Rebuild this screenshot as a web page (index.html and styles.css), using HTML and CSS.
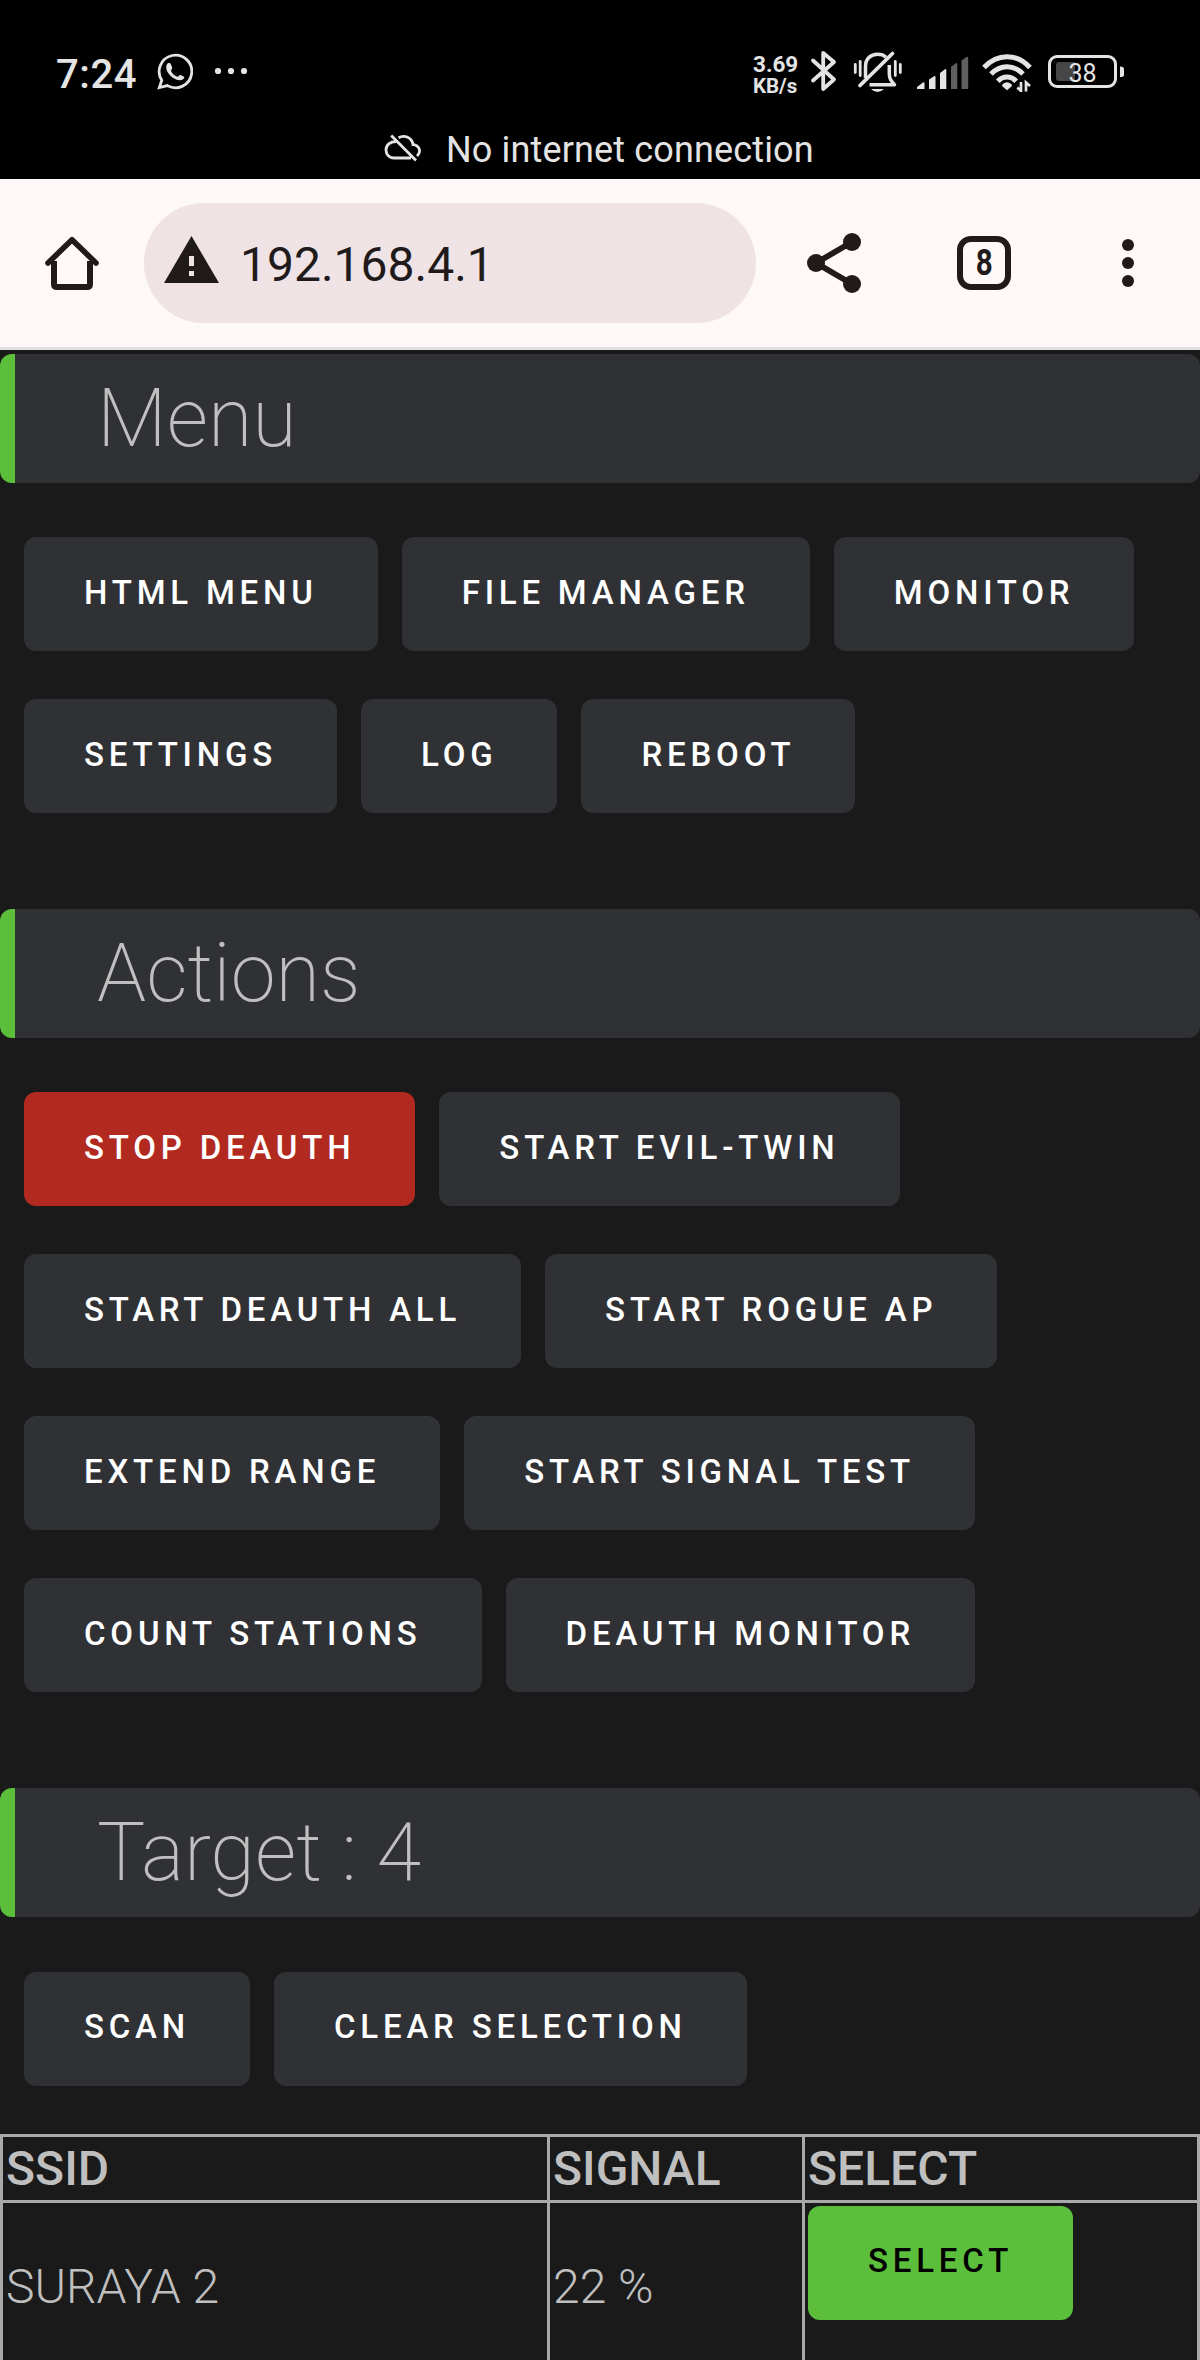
FILE: index.html
```html
<!DOCTYPE html>
<html lang="en">
<head>
<meta charset="utf-8">
<title>192.168.4.1</title>
<link rel="stylesheet" href="styles.css">
</head>
<body>
<header class="status">
  <div class="status-row">
    <span class="clock">7:24</span>
    <svg class="ic-chat" width="36" height="37" viewBox="0 0 36 37" fill="none" stroke="#e4e4e4"><path d="M2.3 34.6 4.8 27.3A16.3 16.3 0 1 1 10.4 32.6Z" stroke-width="2.8"/><path d="M9.8 11.5C11 9.6 13.2 9.6 14 11.5L15.2 14.5C15.5 16 13.6 17 14.2 18.2C15.7 21 17.7 22.6 20.2 23.7C21.3 24.1 22.2 21.7 23.4 22L26.7 23.5C28.5 25 25.5 27 23.7 27.3C17 27.8 8.5 20 9.2 13.6Z" fill="#e4e4e4" stroke="none"/></svg>
    <svg class="ic-more" width="34" height="8" fill="#e4e4e4"><circle cx="4" cy="4" r="3.1"/><circle cx="17" cy="4" r="3.1"/><circle cx="30" cy="4" r="3.1"/></svg>
    <div class="speed"><span>3.69</span><span class="unit">KB/s</span></div>
    <svg class="ic-bt" width="28" height="44" viewBox="0 0 28 44" fill="none" stroke="#e4e4e4" stroke-width="3.8" stroke-linejoin="round" stroke-linecap="round"><path d="M3 11.5 24 30.5 13.2 40V4L24 13 3 31.5"/></svg>
    <svg class="ic-bell" width="50" height="44" viewBox="0 0 50 44" fill="none" stroke="#e4e4e4" stroke-width="3.5"><path d="M12.5 28V16.5C12.5 8.5 18 4.3 24.5 4.3C28 4.3 31 5.3 33 7.2M16.5 34.7H41.5C37.8 30.5 36.3 28.5 36.3 24V15" stroke-linejoin="round"/><path d="M7 35.5 39.5 3.5" stroke-linecap="round" stroke-width="3.8"/><path d="M18 39H31Q24.5 45 18 39Z" fill="#e4e4e4" stroke="none"/><path d="M2.3 14.5V22.5M7.2 11.5V25.5M42.3 11.5V25.5M47.3 14.5V22.5" stroke-width="2.8" stroke-linecap="round"/></svg>
    <svg class="ic-signal" width="52" height="34" viewBox="0 0 52 34" fill="#e4e4e4"><path d="M0 33V31L6 26.5Q7.5 25.5 7.5 27.5V33ZM12 33V23.5L17.5 20Q18.5 19.5 18.5 21V33ZM23 33V17L28 13.2Q29.3 12.6 29.3 14V33Z"/><path fill="#606060" d="M34 33V10.7L39 7.3Q40.3 6.5 40.3 8V33ZM44.5 33V4.5L49.5 1Q51.2 .2 51.2 2V33Z"/></svg>
    <svg class="ic-wifi" width="52" height="40" viewBox="0 0 52 40" fill="none" stroke="#e4e4e4" stroke-width="5"><path d="M3 15.5C16 1 36 1 49 15.5M10 22C19.5 12.3 32.5 12.3 42 22M16.8 29.2C22 23.5 30 23.5 35.2 29.2"/><path d="M21.5 32.2Q26 28.5 30.5 32.2L31 34 26 38.3 21 34Z" fill="#e4e4e4" stroke="none"/><path d="M40 30V39L36.3 35.6M45 39.5V30.5L49 34" stroke-width="2.7"/></svg>
    <svg class="ic-battery" width="77" height="34" viewBox="0 0 77 34"><rect x="1.5" y="1.5" width="66" height="30" rx="7.5" fill="none" stroke="#e4e4e4" stroke-width="3"/><path d="M11 7H27V26H11Q8 26 8 23V10Q8 7 11 7Z" fill="#464646"/><path d="M72 11.5Q76 11.5 76 14V20Q76 22 72 22Z" fill="#e4e4e4"/><text class="level" x="34.5" y="26.8" text-anchor="middle">38</text></svg>
  </div>
  <div class="net">
    <svg width="38" height="28" viewBox="0 0 38 28" fill="none" stroke="#e4e4e4" stroke-width="2.8"><path d="M12 7.5C6 7.5 2 11 2 16C2 20.5 5.5 24 10 24H27M14.5 3.8C20.5.5 28 3.5 29 10.6C35 11 38 17.5 33 22M7.2 1.5 32 26.5"/></svg>
    <span>No internet connection</span>
  </div>
</header>
<nav class="toolbar">
  <svg class="ic-home" width="54" height="54" viewBox="0 0 54 54" fill="none" stroke="#201a1b" stroke-width="6"><path d="M9 25V48Q9 51 12 51H42Q45 51 45 48V25"/><path d="M3 27 27 3.7 51 27" stroke-linecap="round" stroke-linejoin="round" stroke-width="5.6"/></svg>
  <div class="address">
    <svg width="55" height="47" viewBox="0 0 55 47"><path d="M27.5 0 55 47H0Z" fill="#201a1b"/><path d="M25 20H30V30H25ZM25 35H30V40H25Z" fill="#efe3e5"/></svg>
    <span>192.168.4.1</span>
  </div>
  <svg class="ic-share" width="54" height="60" viewBox="0 0 54 60" fill="#201a1b"><path d="M45 9 9 30 45 51" fill="none" stroke="#201a1b" stroke-width="5.8"/><circle cx="45" cy="9" r="9"/><circle cx="9" cy="30" r="9"/><circle cx="45" cy="51" r="9"/></svg>
  <div class="tabs"><span>8</span></div>
  <svg class="ic-menu" width="12" height="48" fill="#201a1b"><circle cx="6" cy="6" r="6"/><circle cx="6" cy="24" r="6"/><circle cx="6" cy="42" r="6"/></svg>
</nav>
<main>
  <section>
    <h1>Menu</h1>
    <div class="buttons"><button>HTML MENU</button><button>FILE MANAGER</button><button>MONITOR</button><button>SETTINGS</button><button>LOG</button><button>REBOOT</button></div>
  </section>
  <section>
    <h1>Actions</h1>
    <div class="buttons"><button class="red">STOP DEAUTH</button><button>START EVIL-TWIN</button><button>START DEAUTH ALL</button><button>START ROGUE AP</button><button>EXTEND RANGE</button><button>START SIGNAL TEST</button><button>COUNT STATIONS</button><button>DEAUTH MONITOR</button></div>
  </section>
  <section>
    <h1>Target : 4</h1>
    <div class="buttons"><button>SCAN</button><button>CLEAR SELECTION</button></div>
    <table>
      <tr><th class="c-ssid">SSID</th><th class="c-signal">SIGNAL</th><th>SELECT</th></tr>
      <tr><td>SURAYA 2</td><td>22 %</td><td><button class="green">SELECT</button></td></tr>
    </table>
  </section>
</main>
</body>
</html>
```
FILE: styles.css
```css
* { box-sizing: border-box; }
html { background: #1a1a1a; }
body { margin: 0; width: 1200px; height: 2360px; overflow: hidden; background: #1a1a1a; color: #bfbfbf; font-family: Roboto, sans-serif; }
svg { display: block; flex: none; }

.status { height: 179px; background: #000; color: #e4e4e4; }
.status-row { display: flex; align-items: flex-start; height: 119px; padding-left: 56px; }
.clock { width: 101px; padding-top: 51px; font-size: 40px; line-height: 47px; font-weight: 480; letter-spacing: 0.6px; }
.ic-chat { margin-top: 53px; }
.ic-more { margin: 67px 0 0 21px; }
.speed { display: flex; flex-direction: column; width: 58px; margin: 52px 0 0 505px; font-size: 22.5px; line-height: 25px; font-weight: 700; }
.speed .unit { font-size: 20.5px; line-height: 19px; }
.ic-bt { margin: 49px 0 0 -1px; }
.ic-bell { margin: 50px 0 0 15px; }
.ic-signal { margin: 56px 0 0 14px; }
.ic-wifi { margin: 52px 0 0 12px; }
.ic-battery { margin: 55px 0 0 15px; }
.level { font-size: 25px; fill: #e4e4e4; font-weight: 400; }
.net { display: flex; gap: 24px; padding-left: 384px; font-size: 36px; line-height: 62px; letter-spacing: 0.15px; }
.net svg { margin-top: 15px; }

.toolbar { display: flex; align-items: center; height: 171px; padding-left: 45px; background: #fef8f8; border-bottom: 3px solid #e3dedf; color: #201a1b; }
.address { display: flex; align-items: center; width: 612px; height: 120px; margin-left: 45px; padding-left: 20px; border-radius: 60px; background: #efe3e5; font-size: 48px; }
.address svg { margin-top: -7px; }
.address span { margin-left: 21px; padding-top: 2px; }
.ic-share { margin-left: 51px; }
.tabs { width: 54px; height: 54px; margin-left: 96px; border: 6px solid #201a1b; border-radius: 14px; font: 700 36px/42px Roboto, sans-serif; text-align: center; }
.tabs span { display: inline-block; transform: scaleX(0.82); }
.ic-menu { margin-left: 111px; }

main { padding-top: 4px; }
h1 { margin: 0 0 54.7px; height: 128.5px; padding-left: 82px; border-left: 15px solid #5cbf3c; border-radius: 12px; background: #303135; font-size: 81px; line-height: 129px; font-weight: 160; }
.buttons { display: flex; flex-wrap: wrap; column-gap: 24px; padding: 0 24px; }
section { margin-bottom: 48px; }
button { height: 114px; margin: 0 0 48px; padding: 0 60px 3px; border: 0; border-radius: 12px; background: #303135; color: #fff; font: 500 33px/110px Roboto, sans-serif; letter-spacing: 4.8px; white-space: nowrap; }
.red { background: #b1291f; }
.green { background: #5cbf3c; color: #000; }

table { width: 1200px; table-layout: fixed; border-collapse: collapse; font-size: 48px; }
th, td { padding: 3px; border: 3px solid #a9a9a9; text-align: left; font-weight: 300; line-height: 57px; }
th { font-weight: 500; }
td button { display: block; }
.c-ssid { width: 547px; }
.c-signal { width: 255px; }
```
